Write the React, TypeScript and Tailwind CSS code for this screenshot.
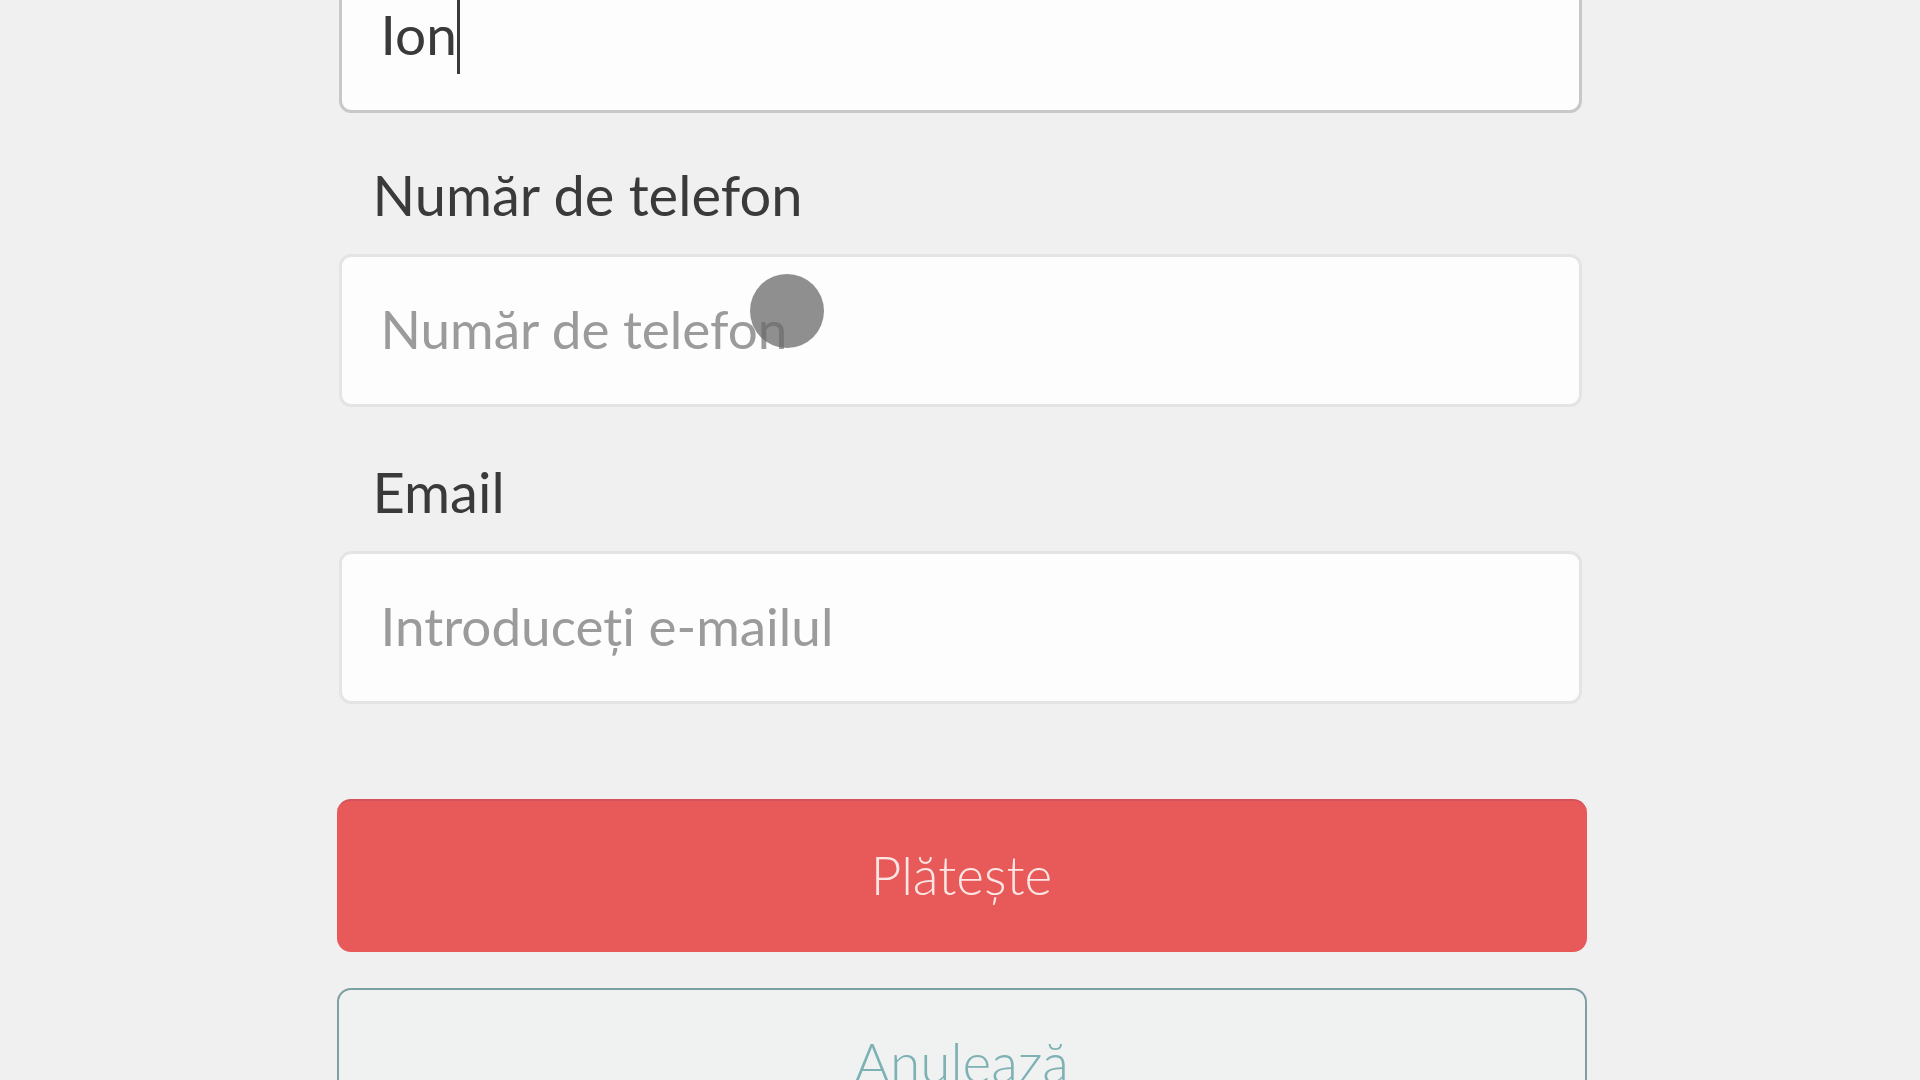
export default function App() {
  return (
    <div className="min-h-screen w-full bg-[#f0f0f0] overflow-hidden" style={{ fontFamily: "Lato, 'Noto Sans', sans-serif" }}>
      <div className="mx-auto w-[1243px] mt-[-38px] flex flex-col">
        {/* nume (focus) */}
        <div className="h-[151px] bg-[#fdfdfd] border-[3px] border-[#c8c8c8] rounded-[12px] flex items-center pl-[39px]">
          <span className="text-[55px] leading-none text-[#3a3a3a] mt-[-6px]">Ion</span>
          <span className="w-[3px] h-[82px] bg-[#3a3a3a] mt-[-10px]" />
        </div>

        <label className="mt-[54px] mb-[31px] pl-[34px] text-[56px] leading-none text-[#3a3a3a]">
          Număr de telefon
        </label>
        <div className="relative h-[153px] bg-[#fdfdfd] border-[3px] border-[#e4e4e4] rounded-[12px] flex items-center pl-[39px]">
          <span className="text-[53px] leading-none text-[#9b9b9b] mt-[-4px]">Număr de telefon</span>
          <span className="absolute left-[408px] top-[17px] w-[74px] h-[74px] rounded-full bg-[#6a6a6a]/75" />
        </div>

        <label className="mt-[57px] mb-[31px] pl-[34px] text-[56px] leading-none text-[#3a3a3a]">
          Email
        </label>
        <div className="h-[153px] bg-[#fdfdfd] border-[3px] border-[#e4e4e4] rounded-[12px] flex items-center pl-[39px]">
          <span className="text-[53px] leading-none text-[#9b9b9b] mt-[-4px]">Introduceți e-mailul</span>
        </div>

        <div className="mt-[95px] -ml-[2px] -mr-[5px] flex flex-col gap-[36px]">
          <button className="h-[153px] w-full bg-[#e85a5a] border-t-2 border-[#d6525a] rounded-[14px] text-[53px] font-light text-[#fde6e3] pb-[4px]">
            Plătește
          </button>
          <button className="h-[153px] w-full bg-[#f0f2f2] border-2 border-[#7e9fa3] rounded-[14px] text-[55px] font-light text-[#7db1b3] pb-[4px]">
            Anulează
          </button>
        </div>
      </div>
    </div>
  );
}
